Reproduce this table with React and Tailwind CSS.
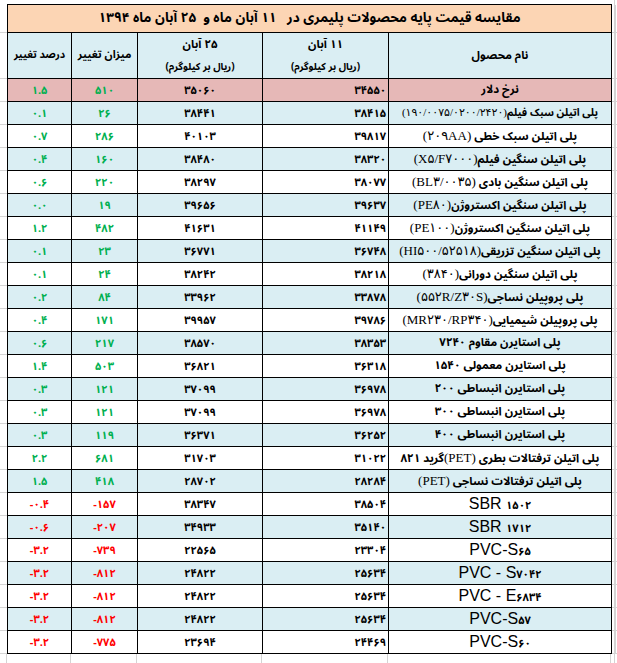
import React from "react";

const fa = (s) => String(s).replace(/[0-9]/g, (d) => "۰۱۲۳۴۵۶۷۸۹"[d]);

const rows = [
  { n: "نرخ دلار", a: "34550", b: "35060", c: "510", d: "1.5", bg: "pink" },
  { n: "پلی اتیلن سبک فیلم", code: "(190/0075/0200/2420)", a: "38415", b: "38441", c: "26", d: "0.1", tight: true },
  { n: "پلی اتیلن سبک خطی ", code: "(209AA)", a: "39817", b: "40103", c: "286", d: "0.7" },
  { n: "پلی اتیلن سنگین فیلم", code: "(X5/F7000)", a: "38320", b: "38480", c: "160", d: "0.4" },
  { n: "پلی اتیلن سنگین بادی ", code: "(BL3/0035)", a: "38077", b: "38297", c: "220", d: "0.6" },
  { n: "پلی اتیلن سنگین اکستروژن", code: "(PE80)", a: "39637", b: "39656", c: "19", d: "0.0" },
  { n: "پلی اتیلن سنگین اکستروژن", code: "(PE100)", a: "41149", b: "41631", c: "482", d: "1.2" },
  { n: "پلی اتیلن سنگین تزریقی", code: "(HI500/52518)", a: "36748", b: "36771", c: "23", d: "0.1" },
  { n: "پلی اتیلن سنگین دورانی", code: "(3840)", a: "38218", b: "38242", c: "24", d: "0.1" },
  { n: "پلی پروپیلن نساجی", code: "(552R/Z30S)", a: "33878", b: "33962", c: "84", d: "0.2" },
  { n: "پلی پروپیلن شیمیایی", code: "(MR230/RP340)", a: "39786", b: "39957", c: "171", d: "0.4" },
  { n: "پلی استایرن مقاوم ۷۲۴۰", a: "38353", b: "38570", c: "217", d: "0.6" },
  { n: "پلی استایرن معمولی ۱۵۴۰", a: "36318", b: "36821", c: "503", d: "1.4" },
  { n: "پلی استایرن انبساطی ۲۰۰", a: "36978", b: "37099", c: "121", d: "0.3" },
  { n: "پلی استایرن انبساطی ۳۰۰", a: "36978", b: "37099", c: "121", d: "0.3" },
  { n: "پلی استایرن انبساطی ۴۰۰", a: "36252", b: "36371", c: "119", d: "0.3" },
  { n: "پلی اتیلن ترفتالات بطری (PET)گرید ۸۲۱", a: "31022", b: "31703", c: "681", d: "2.2" },
  { n: "پلی اتیلن ترفتالات نساجی (PET)", a: "28284", b: "28702", c: "418", d: "1.5" },
  { latin: "SBR ", num: "1502", a: "38504", b: "38347", c: "-157", d: "-0.4" },
  { latin: "SBR ", num: "1712", a: "35140", b: "34933", c: "-207", d: "-0.6" },
  { latin: "PVC-S", num: "65", a: "23304", b: "22565", c: "-739", d: "-3.2" },
  { latin: "PVC - S", num: "7042", a: "25634", b: "24822", c: "-812", d: "-3.2" },
  { latin: "PVC - E", num: "6834", a: "25634", b: "24822", c: "-812", d: "-3.2" },
  { latin: "PVC-S", num: "57", a: "25634", b: "24822", c: "-812", d: "-3.2" },
  { latin: "PVC-S", num: "60", a: "24469", b: "23694", c: "-775", d: "-3.2" },
];

const FA = { fontFamily: '"B Nazanin", "Noto Sans Arabic", "DejaVu Sans", sans-serif' };
const SERIF = { fontFamily: '"Liberation Serif", "DejaVu Sans", serif' };
const SANS = { fontFamily: '"Liberation Sans", "DejaVu Sans", sans-serif' };

function Margins({ children, h }) {
  return (
    <div className={`flex shrink-0 ${h}`}>
      <div className="w-[7px] shrink-0 border-b border-[#d4d4d4]" />
      <div className="w-[1px] shrink-0 bg-black" />
      {children}
      <div className="w-[3px] shrink-0 border-b border-[#d4d4d4]" />
      <div className="w-[1px] shrink-0 bg-[#d4d4d4]" />
      <div className="flex-1 border-b border-[#d4d4d4]" />
    </div>
  );
}

function DataRow({ r, i }) {
  const bg = r.bg === "pink" ? "bg-[#e6b8b7]" : i % 2 === 1 ? "bg-[#daeef3]" : "bg-white";
  const neg = r.c.startsWith("-");
  const chg = neg ? "text-[#ff0000]" : "text-[#00b050]";
  const cell = `border-r border-b border-black ${bg} flex items-center leading-none`;
  return (
    <Margins h="h-[23px]">
      <div className={`${cell} w-[64px] justify-center text-[11px] font-bold ${chg}`} style={FA} dir="ltr">
        {fa(r.d)}
      </div>
      <div className={`${cell} w-[66px] justify-center text-[11px] font-bold ${chg}`} style={FA} dir="ltr">
        {fa(r.c)}
      </div>
      <div className={`${cell} w-[125px] justify-center text-[11px] font-bold text-black`} style={FA} dir="ltr">
        {fa(r.b)}
      </div>
      <div className={`${cell} w-[126px] justify-end pr-[2px] text-[11px] font-bold text-black`} style={FA} dir="ltr">
        {fa(r.a)}
      </div>
      <div className={`${cell} w-[223px] justify-center text-black whitespace-nowrap`}>
        {r.latin ? (
          <span dir="ltr" className="text-[16px] leading-none" style={SANS}>
            {r.latin}
            <span className="text-[11px] font-bold" style={FA}>{fa(r.num)}</span>
          </span>
        ) : (
          <span
            dir="rtl"
            className={`${r.tight ? "text-[10.5px]" : "text-[11.5px]"} font-bold leading-none`}
            style={FA}
          >
            {fa(r.n).split(/(\(PET\))/).map((p, k) =>
              p === "(PET)" ? (
                <span key={k} className="text-[13px] font-normal" style={SERIF}>{p}</span>
              ) : (
                <span key={k}>{p}</span>
              )
            )}
            {r.code && (
              <bdi
                dir="ltr"
                className={`${r.tight ? "text-[11px] tracking-[-0.3px]" : "text-[13px]"} font-normal`}
                style={SERIF}
              >
                {fa(r.code)}
              </bdi>
            )}
          </span>
        )}
      </div>
    </Margins>
  );
}

export default function App() {
  return (
    <div className="w-[617px] h-[663px] bg-white overflow-hidden flex flex-col bg-[linear-gradient(to_right,transparent_614px,#d4d4d4_614px,#d4d4d4_615px,transparent_615px)]">
      <div className="h-[4px] shrink-0" />
      <div className="flex h-[1px] shrink-0">
        <div className="w-[7px]" />
        <div className="w-[605px] bg-black" />
      </div>
      <Margins h="h-[28px]">
        <div
          className="w-[604px] border-r border-b border-black bg-[#fcd5b4] flex items-center justify-center text-[13.5px] font-bold text-black whitespace-nowrap"
          style={FA}
          dir="rtl"
        >
          مقایسه قیمت پایه محصولات پلیمری در &nbsp; ۱۱ آبان ماه و &nbsp;۲۵ آبان ماه ۱۳۹۴
        </div>
      </Margins>
      <Margins h="h-[46px]">
        <div className="w-[64px] border-r border-b border-black bg-[#daeef3] flex items-center justify-center text-[10.5px] font-bold whitespace-nowrap" style={FA} dir="rtl">
          درصد تغییر
        </div>
        <div className="w-[66px] border-r border-b border-black bg-[#daeef3] flex items-center justify-center text-[11px] font-bold whitespace-nowrap" style={FA} dir="rtl">
          میزان تغییر
        </div>
        <div className="w-[125px] border-r border-b border-black bg-[#daeef3] flex flex-col items-center justify-center gap-[11px] font-bold" style={FA} dir="rtl">
          <span className="text-[11.5px] leading-none">۲۵ آبان</span>
          <span className="text-[10px] leading-none">(ریال بر کیلوگرم)</span>
        </div>
        <div className="w-[126px] border-r border-b border-black bg-[#daeef3] flex flex-col items-center justify-center gap-[11px] font-bold" style={FA} dir="rtl">
          <span className="text-[11.5px] leading-none">۱۱ آبان</span>
          <span className="text-[10px] leading-none">(ریال بر کیلوگرم)</span>
        </div>
        <div className="w-[223px] border-r border-b border-black bg-[#daeef3] flex items-center justify-center text-[11.5px] font-bold" style={FA} dir="rtl">
          نام محصول
        </div>
      </Margins>
      {rows.map((r, i) => (
        <DataRow key={i} r={r} i={i} />
      ))}
      <div className="flex flex-1">
        <div className="w-[7px] border-r border-[#d4d4d4]" />
        <div className="w-[64px] border-r border-[#d4d4d4]" />
        <div className="w-[66px] border-r border-[#d4d4d4]" />
        <div className="w-[125px] border-r border-[#d4d4d4]" />
        <div className="w-[126px] border-r border-[#d4d4d4]" />
        <div className="w-[223px] border-r border-[#d4d4d4]" />
      </div>
    </div>
  );
}
